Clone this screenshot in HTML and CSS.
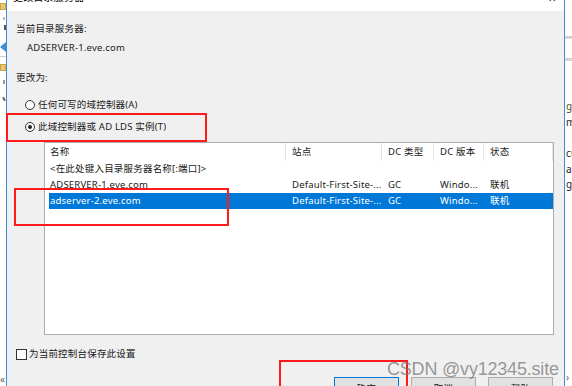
FILE: index.html
```html
<!DOCTYPE html>
<html lang="zh-CN">
<head>
<meta charset="utf-8">
<title>更改目录服务器</title>
<link rel="stylesheet" href="styles.css">
</head>
<body>
<div class="screen">
  <div class="bg-left">
    <span class="ico folder f1"></span>
    <span class="mark m1"></span>
    <span class="mark m2"></span>
    <span class="tri"></span>
    <span class="hline"></span>
    <span class="ico folder f2"></span>
    <span class="mark m3"></span>
    <span class="mark m4"></span>
    <span class="chev">«</span>
  </div>

  <div class="dialog">
    <div class="titlebar">
      <span class="title">更改目录服务器</span>
      <span class="close">✕</span>
    </div>
    <div class="body">
      <div class="label l1">当前目录服务器:</div>
      <div class="label l2">ADSERVER-1.eve.com</div>
      <div class="label l3">更改为:</div>
      <label class="radio r1"><span class="circle"></span>任何可写的域控制器(A)</label>
      <label class="radio r2"><span class="circle on"></span>此域控制器或 AD LDS 实例(T)</label>

      <div class="list">
        <div class="row head">
          <div class="c c1">名称</div>
          <div class="c c2">站点</div>
          <div class="c c3">DC 类型</div>
          <div class="c c4">DC 版本</div>
          <div class="c c5">状态</div>
        </div>
        <div class="row">
          <div class="c c1">&lt;在此处键入目录服务器名称[:端口]&gt;</div>
        </div>
        <div class="row">
          <div class="c c1">ADSERVER-1.eve.com</div>
          <div class="c c2">Default-First-Site-...</div>
          <div class="c c3">GC</div>
          <div class="c c4">Windo...</div>
          <div class="c c5">联机</div>
        </div>
        <div class="row sel">
          <div class="c c1">adserver-2.eve.com</div>
          <div class="c c2">Default-First-Site-...</div>
          <div class="c c3">GC</div>
          <div class="c c4">Windo...</div>
          <div class="c c5">联机</div>
        </div>
      </div>

      <label class="check"><span class="box"></span>为当前控制台保存此设置</label>

      <div class="buttons">
        <span class="btn primary">确定</span>
        <span class="btn">取消</span>
        <span class="btn">帮助</span>
      </div>
    </div>
  </div>

  <div class="bg-right">
    <span class="band b1"></span>
    <span class="band b2"></span>
    <span class="frag t1">gro</span>
    <span class="frag t2">ma</span>
    <span class="frag t3">cu</span>
    <span class="frag t4">an</span>
    <span class="frag t5">gro</span>
    <span class="chev r">›</span>
  </div>

  <div class="redbox rb1"></div>
  <div class="redbox rb2"></div>
  <div class="redbox rb3"></div>
  <div class="watermark">CSDN @vy12345.site</div>
</div>
</body>
</html>
```

FILE: styles.css
```css
* { box-sizing: border-box; }
html, body {
  margin: 0;
  padding: 0;
  width: 572px;
  height: 386px;
  overflow: hidden;
  background: #fff;
}
body {
  font-family: "Segoe UI", "Noto Sans", "Noto Sans CJK SC", sans-serif;
  font-size: 9.5px;
  letter-spacing: 0.2px;
  color: #1a1a1a;
}
.screen {
  position: relative;
  width: 572px;
  height: 386px;
  display: flex;
  overflow: hidden;
}

/* background window strips */
.bg-left {
  position: relative;
  width: 6px;
  flex: none;
  background: #fff;
  overflow: hidden;
}
.bg-right {
  position: relative;
  width: 7px;
  flex: none;
  background: #fff;
  overflow: hidden;
}
.ico, .mark, .tri, .hline, .band, .frag, .chev { position: absolute; }
.folder {
  width: 6px;
  height: 7px;
  background: #e8c870;
  border: 1px solid #c9a648;
}
.f1 { top: 3px; left: 0; }
.f2 { top: 64px; left: 0; }
.mark { width: 2px; background: #777; }
.m1 { top: 17px; left: 3px; height: 3px; background: #bbb; }
.m2 { top: 25px; left: 4px; height: 5px; background: #555; }
.m3 { top: 80px; left: 3px; height: 4px; background: #999; }
.m4 { top: 97px; left: 3px; height: 4px; background: #666; transform: rotate(-30deg); }
.tri {
  top: 42px;
  left: 0;
  width: 0; height: 0;
  border-top: 5px solid transparent;
  border-bottom: 5px solid transparent;
  border-right: 6px solid #3b8ed8;
}
.hline { top: 56px; left: 0; width: 6px; height: 1px; background: #ccc; }
.chev { font-size: 10px; line-height: 10px; color: #666; }
.bg-left .chev { top: 374px; left: 0; }
.chev.r { top: 372px; left: 1px; }
.band { left: 0; width: 7px; height: 3px; background: #d8d8d8; border-top: 1px solid #c8c8c8; }
.b1 { top: 36px; }
.b2 { top: 58px; }
.frag {
  left: 1px;
  font-size: 10px;
  line-height: 14px;
  color: #222;
  white-space: nowrap;
}
.t1 { top: 99px; color: #5a4a20; }
.t2 { top: 115px; }
.t3 { top: 146px; }
.t4 { top: 162px; }
.t5 { top: 177px; }

/* dialog */
.dialog {
  flex: none;
  width: 559px;
  height: 386px;
  border-left: 1px solid #3f8fd8;
  border-right: 1px solid #3f8fd8;
  background: #f0f0f0;
  display: flex;
  flex-direction: column;
}
.titlebar {
  position: relative;
  height: 11px;
  background: #fff;
  flex: none;
  overflow: hidden;
}
.title {
  position: absolute;
  left: 6px;
  top: -11px;
  font-size: 10px;
  line-height: 16px;
  color: #000;
}
.close {
  position: absolute;
  left: 541px;
  top: -8px;
  font-size: 10px;
  line-height: 12px;
  color: #333;
}
.body {
  padding: 0 10px 0 9px;
  display: flex;
  flex-direction: column;
}
.label { height: 16px; line-height: 16px; white-space: nowrap; }
.l1 { margin-top: 10px; }
.l2 { margin-top: 3px; padding-left: 11px; }
.l3 { margin-top: 14px; }

.radio {
  display: flex;
  align-items: center;
  height: 16px;
  line-height: 16px;
  margin-left: 9px;
  white-space: nowrap;
}
.r1 { margin-top: 11px; }
.r2 { margin-top: 6px; }
.circle {
  width: 10px;
  height: 10px;
  border: 1px solid #333;
  border-radius: 50%;
  background: #fff;
  margin-right: 3px;
  position: relative;
  flex: none;
}
.circle.on::after {
  content: "";
  position: absolute;
  left: 2px; top: 2px;
  width: 4px; height: 4px;
  border-radius: 50%;
  background: #222;
}

.list {
  margin-top: 7px;
  margin-left: 28px;
  width: 510px;
  height: 193px;
  background: #fff;
  border: 1px solid #adadad;
  flex: none;
}
.row {
  display: grid;
  grid-template-columns: 241px 96px 52px 50px 69px;
  height: 16px;
  line-height: 16px;
  white-space: nowrap;
}
.row.head { height: 18px; line-height: 18px; }
.row.head .c { border-right: 1px solid #e5e5e5; }
.c { padding-left: 6px; overflow: hidden; }
.c1 { padding-left: 5px; }
.row.sel { background: #0078d7; color: #fff; margin-left: 4px; width: 504px; grid-template-columns: 237px 96px 52px 50px 69px; }
.row.sel .c1 { padding-left: 1px; }

.check {
  display: flex;
  align-items: center;
  height: 16px;
  line-height: 16px;
  margin-top: 11px;
  white-space: nowrap;
}
.box {
  width: 11px;
  height: 11px;
  border: 1px solid #333;
  background: #fff;
  margin-right: 2px;
  flex: none;
}

.buttons {
  margin-top: 15px;
  display: flex;
  gap: 12px;
  padding-left: 318px;
}
.btn {
  width: 65px;
  height: 22px;
  background: #e1e1e1;
  border: 1px solid #adadad;
  text-align: center;
  line-height: 20px;
  padding-top: 1px;
  color: #111;
}
.btn.primary { border-color: #0078d7; }

/* overlays */
.redbox {
  position: absolute;
  border: 2px solid #ff1a1a;
}
.rb1 { left: 6px; top: 113px; width: 201px; height: 29px; }
.rb2 { left: 14px; top: 188px; width: 215px; height: 38px; }
.rb3 { left: 279px; top: 360px; width: 129px; height: 40px; }
.watermark {
  position: absolute;
  left: 387px;
  top: 358px;
  font-family: "Liberation Sans", Arial, sans-serif;
  font-size: 18px;
  line-height: 22px;
  color: rgba(120, 120, 120, 0.75);
  white-space: nowrap;
  letter-spacing: -0.2px;
}
```
